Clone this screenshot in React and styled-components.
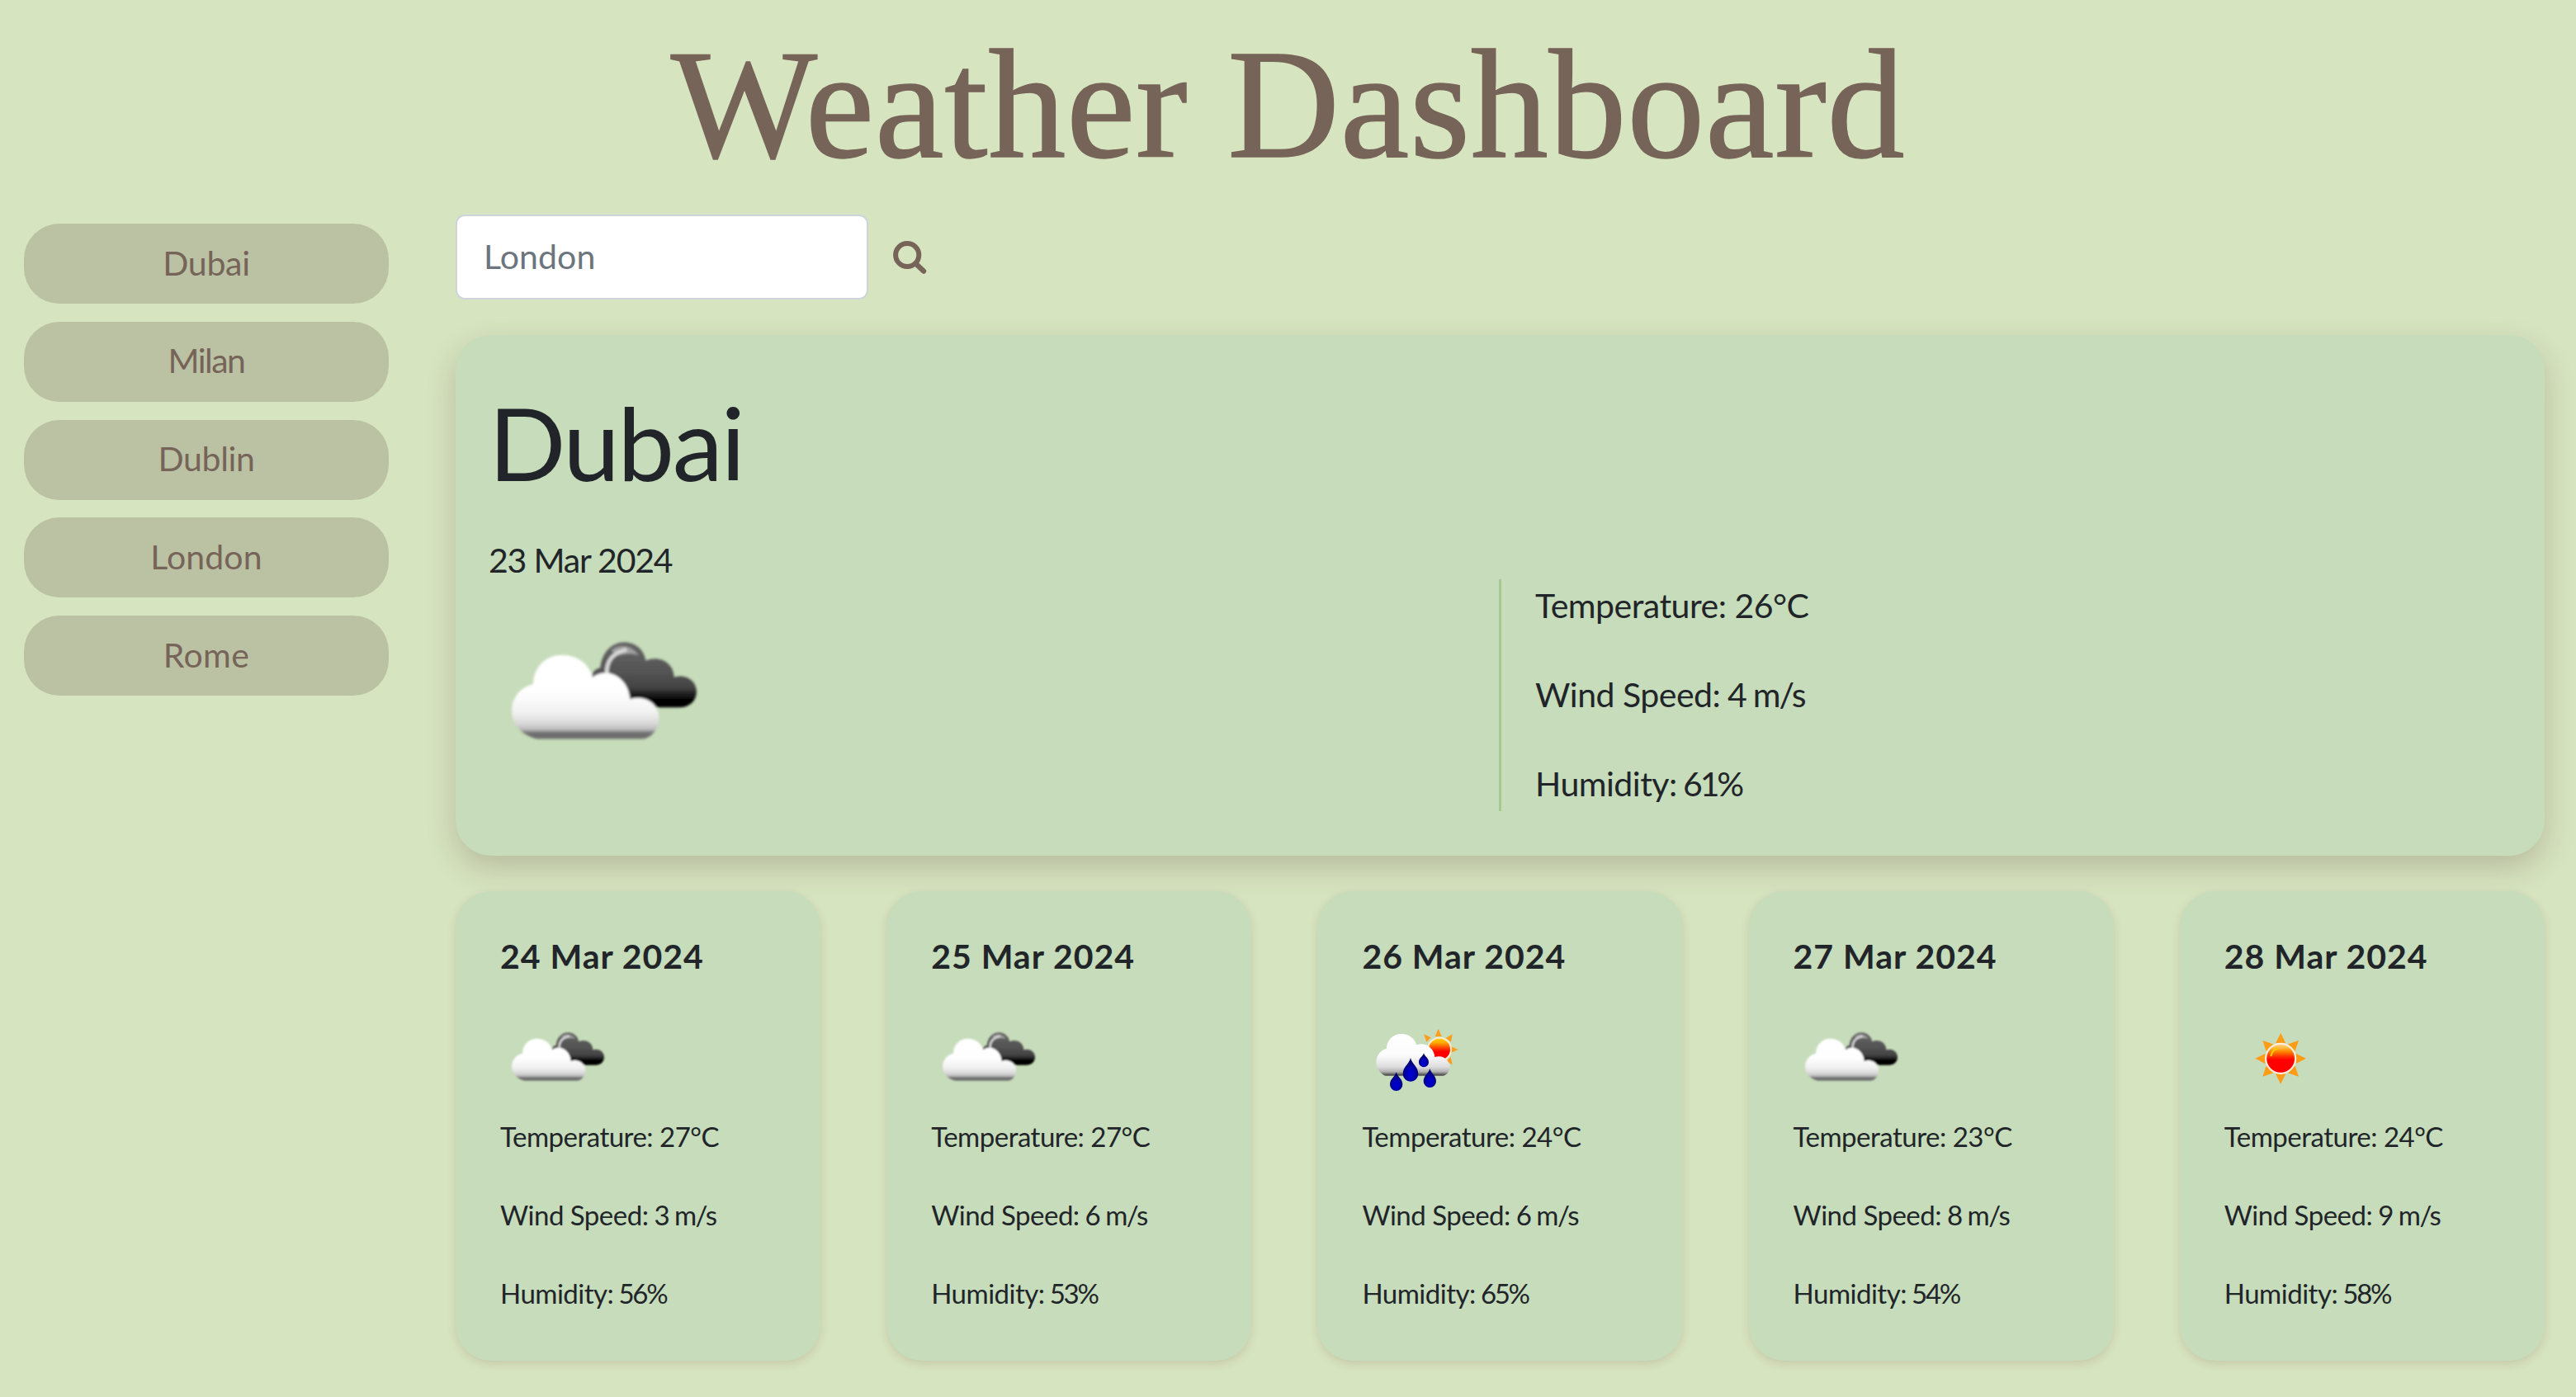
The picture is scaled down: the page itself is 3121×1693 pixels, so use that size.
import React from "react";
import styled, { createGlobalStyle } from "styled-components";

const GlobalStyle = createGlobalStyle`
  *, *::before, *::after { box-sizing: border-box; }
  body {
    margin: 0;
    min-height: 100vh;
    background: #d7e4c0;
    color: #212529;
    font-family: Lato, "Open Sans", sans-serif;
  }
  h1, h2, h3, p, ul { margin: 0; padding: 0; }
`;

const Title = styled.h1`
  height: 252px;
  line-height: 253px;
  text-align: center;
  font-family: "Liberation Serif", serif;
  font-size: 188px;
  font-weight: 400;
  letter-spacing: 0.75px;
  color: #776459;
  -webkit-text-stroke: 1.5px #776459;
`;

const Layout = styled.div`
  display: flex;
  gap: 81px;
  padding: 8px 38px 40px 29px;
`;

const History = styled.aside`
  flex: 0 0 442px;
  display: flex;
  flex-direction: column;
  gap: 21.8px;
  padding-top: 11px;
`;

const HistoryButton = styled.button`
  height: 97px;
  padding: 0 0 3px;
  border: 0;
  border-radius: 43px;
  background: #bbc2a4;
  color: #776459;
  font-family: inherit;
  font-size: 41px;
  letter-spacing: ${(p) => p.$tracking}px;
`;

const Main = styled.main`
  flex: 1;
  min-width: 0;
  display: flex;
  flex-direction: column;
`;

const SearchForm = styled.form`
  display: flex;
  align-items: center;
  gap: 29px;
  height: 103px;
`;

const SearchInput = styled.input`
  width: 500px;
  height: 103px;
  padding: 0 32px 3px;
  border: 2px solid #ced4da;
  border-radius: 11px;
  background: #fff;
  color: #212529;
  font-family: inherit;
  font-size: 41px;
  letter-spacing: 0.1px;
  outline: none;
  &::placeholder { color: #6c757d; opacity: 1; }
`;

const SearchButton = styled.button`
  display: flex;
  padding: 0;
  border: 0;
  background: none;
  color: #776459;
`;

const Today = styled.section`
  height: 631px;
  margin-top: 43px;
  padding: 56px 40px 0;
  border-radius: 43px;
  background: #c6dcba;
  box-shadow: 0 15px 36px rgba(60, 32, 25, 0.2);
`;

const City = styled.h2`
  line-height: 148px;
  font-size: 123px;
  font-weight: 400;
  letter-spacing: -2.4px;
`;

const TodayDate = styled.p`
  margin-top: 46px;
  line-height: 46px;
  font-size: 41px;
  letter-spacing: -1.2px;
`;

const Conditions = styled.div`
  display: grid;
  grid-template-columns: 1224px 1fr;
  height: 281px;
`;

const TodayIcon = styled.div`
  padding-top: 34px;
  margin-left: -2px;
`;

const TodayStats = styled.div`
  display: flex;
  flex-direction: column;
  gap: 48px;
  padding: 2px 0 0 41px;
  border-left: 3px solid #a5c990;
  font-size: 41px;
  line-height: 60px;
`;

const Forecast = styled.div`
  display: grid;
  grid-template-columns: repeat(5, 1fr);
  gap: 80px;
  margin-top: 43px;
`;

const DayCard = styled.article`
  height: 569px;
  padding: 54px 0 0 54px;
  border-radius: 43px;
  background: #c6dcba;
  box-shadow: 0 4px 11px rgba(90, 30, 20, 0.13);
`;

const DayDate = styled.h3`
  line-height: 50px;
  font-size: 41px;
  font-weight: 700;
  letter-spacing: 0.98px;
`;

const DayIcon = styled.div`
  height: 110px;
  margin: 46px 0 12px -1px;
`;

const DayStats = styled.div`
  display: flex;
  flex-direction: column;
  gap: 45px;
  font-size: 33px;
  line-height: 50px;
`;

const Stat = styled.p`
  white-space: pre;
  letter-spacing: -0.5px;
`;

const Value = styled.span`
  letter-spacing: ${(p) => p.$tracking}px;
`;

const IconSvg = styled.svg`
  display: block;
`;

function SearchIcon() {
  return (
    <IconSvg width="42" height="42" viewBox="0 0 42 42" fill="none" stroke="currentColor" strokeWidth="6">
      <circle cx="18.2" cy="18" r="14.1" />
      <path d="M28.5 28.5 L38 37.5" strokeWidth="6.4" strokeLinecap="round" />
    </IconSvg>
  );
}

function CloudsIcon({ id, width, height }) {
  return (
    <IconSvg width={width} height={height} viewBox="0 0 840 660">
      <defs>
        <linearGradient id={`${id}-light`} gradientUnits="userSpaceOnUse" x1="0" y1="131" x2="0" y2="438">
          <stop offset="0" stopColor="#fff" />
          <stop offset="0.45" stopColor="#fefefe" />
          <stop offset="0.68" stopColor="#f1f1f1" />
          <stop offset="0.81" stopColor="#dadada" />
          <stop offset="0.88" stopColor="#bdbdbd" />
          <stop offset="0.925" stopColor="#707070" />
          <stop offset="0.97" stopColor="#6a6a6a" />
          <stop offset="1" stopColor="#858585" />
        </linearGradient>
        <linearGradient id={`${id}-dark`} gradientUnits="userSpaceOnUse" x1="0" y1="85" x2="0" y2="322">
          <stop offset="0" stopColor="#666" />
          <stop offset="0.45" stopColor="#545454" />
          <stop offset="0.7" stopColor="#424242" />
          <stop offset="0.88" stopColor="#020202" />
          <stop offset="1" stopColor="#000" />
        </linearGradient>
        <filter id={`${id}-soft`} x="-5%" y="-5%" width="110%" height="110%">
          <feGaussianBlur stdDeviation="5" />
        </filter>
      </defs>
      <g transform="translate(0 42)" filter={`url(#${id}-soft)`}>
        <path
          fill={`url(#${id}-dark)`}
          d="M378 216C384 192 396 180 412 178C418 120 455 85 500 85C545 87 570 115 578 152C625 130 680 160 680 212C728 198 762 230 762 265C760 300 735 322 700 322H480V216Z"
        />
        <path d="M452 116C470 96 520 88 552 132C520 122 500 128 475 132Z" fill="#a0a0a0" />
        <path d="M436 204C432 160 452 124 508 112" fill="none" stroke="#d8d8d8" strokeWidth="14" />
        <path
          fill={`url(#${id}-light)`}
          d="M185 437C130 425 90 385 90 335C90 285 125 245 168 238C168 178 212 131 272 131C330 131 372 165 384 212C440 172 515 215 520 292C575 275 625 308 625 360C625 400 600 432 565 437Z"
        />
      </g>
    </IconSvg>
  );
}

function RainIcon({ id, width, height }) {
  const drops = [
    [180, 156, 242, 28],
    [128, 208, 276, 23],
    [250, 195, 264, 23],
    [228, 139, 190, 18],
  ];
  return (
    <IconSvg width={width} height={height} viewBox="0 0 420 330">
      <defs>
        <linearGradient id={`${id}-cloud`} gradientUnits="userSpaceOnUse" x1="0" y1="69" x2="0" y2="222">
          <stop offset="0" stopColor="#fff" />
          <stop offset="0.5" stopColor="#fcfcfc" />
          <stop offset="0.78" stopColor="#dedede" />
          <stop offset="0.9" stopColor="#b0b0b0" />
          <stop offset="0.97" stopColor="#555" />
          <stop offset="1" stopColor="#555" />
        </linearGradient>
        <linearGradient id={`${id}-sun`} gradientUnits="userSpaceOnUse" x1="0" y1="82" x2="0" y2="170">
          <stop offset="0" stopColor="#ffd400" />
          <stop offset="0.2" stopColor="#ffb000" />
          <stop offset="0.45" stopColor="#ff3a00" />
          <stop offset="0.58" stopColor="#f00" />
          <stop offset="1" stopColor="#f00" />
        </linearGradient>
        <radialGradient id={`${id}-drop`} cx="0.5" cy="0.68" r="0.5">
          <stop offset="0" stopColor="#0000d8" />
          <stop offset="0.5" stopColor="#0000bb" />
          <stop offset="1" stopColor="#00006c" />
        </radialGradient>
        <filter id={`${id}-soft`} x="-5%" y="-5%" width="110%" height="110%">
          <feGaussianBlur stdDeviation="2.2" />
        </filter>
      </defs>
      <g filter={`url(#${id}-soft)`}>
        <path
          fill="#ff9d1c"
          d="M281 50L293 78H269ZM332 70L327 98L308 84ZM353 126L326 114V138ZM332 181L310 168L326 152ZM228 70L254 82L238 98Z"
        />
        <circle cx="285" cy="125" r="42" fill={`url(#${id}-sun)`} stroke="#ffecd0" strokeWidth="6" />
        <path
          fill={`url(#${id}-cloud)`}
          d="M88 221C68 212 55 192 55 170C56 145 73 126 93 122C93 92 116 69 147 69C174 69 194 85 202 109C235 96 266 122 268 153C298 143 322 164 322 190C322 206 312 217 300 221Z"
        />
        {drops.map(([x, top, bottom, r]) => (
          <path
            key={x}
            fill={`url(#${id}-drop)`}
            d={`M${x} ${top}C${x + 5} ${top + r * 0.8} ${x + r} ${bottom - r * 1.9} ${x + r} ${bottom - r}A${r} ${r} 0 0 1 ${x - r} ${bottom - r}C${x - r} ${bottom - r * 1.9} ${x - 5} ${top + r * 0.8} ${x} ${top}Z`}
          />
        ))}
      </g>
    </IconSvg>
  );
}

function SunIcon({ id, width, height }) {
  return (
    <IconSvg width={width} height={height} viewBox="-17 0 420 330">
      <defs>
        <linearGradient id={`${id}-disc`} gradientUnits="userSpaceOnUse" x1="0" y1="104" x2="0" y2="212">
          <stop offset="0" stopColor="#ffd890" />
          <stop offset="0.15" stopColor="#ffb840" />
          <stop offset="0.26" stopColor="#ff8a00" />
          <stop offset="0.45" stopColor="#ff2a00" />
          <stop offset="0.54" stopColor="#f00" />
          <stop offset="1" stopColor="#f00" />
        </linearGradient>
        <filter id={`${id}-soft`} x="-5%" y="-5%" width="110%" height="110%">
          <feGaussianBlur stdDeviation="2.2" />
        </filter>
      </defs>
      <g filter={`url(#${id}-soft)`}>
        {[0, 45, 90, 135, 180, 225, 270, 315].map((angle) => (
          <path key={angle} d="M190.5 66L209 103H172Z" fill="#ff9c18" transform={`rotate(${angle} 190.5 158.5)`} />
        ))}
        <circle cx="190.5" cy="158.5" r="54" fill={`url(#${id}-disc)`} stroke="#ffeedd" strokeWidth="6.5" />
        <path d="M155 150C158 134 166 125 180 121" fill="none" stroke="#ffc800" strokeWidth="7" />
      </g>
    </IconSvg>
  );
}

const icons = { clouds: CloudsIcon, rain: RainIcon, sun: SunIcon };

const cities = [
  { name: "Dubai", tracking: -0.26 },
  { name: "Milan", tracking: -1.5 },
  { name: "Dublin", tracking: -0.34 },
  { name: "London", tracking: 0.1 },
  { name: "Rome", tracking: 0.39 },
];

const days = [
  { date: "24 Mar 2024", icon: "clouds", temp: 27, wind: 3, humidity: 56 },
  { date: "25 Mar 2024", icon: "clouds", temp: 27, wind: 6, humidity: 53 },
  { date: "26 Mar 2024", icon: "rain", temp: 24, wind: 6, humidity: 65 },
  { date: "27 Mar 2024", icon: "clouds", temp: 23, wind: 8, humidity: 54 },
  { date: "28 Mar 2024", icon: "sun", temp: 24, wind: 9, humidity: 58 },
];

function Stats({ temp, wind, humidity, tracking }) {
  return (
    <>
      <Stat>Temperature:<Value $tracking={tracking[0]}> {temp}°C</Value></Stat>
      <Stat>Wind Speed:<Value $tracking={tracking[1]}> {wind} m/s</Value></Stat>
      <Stat>Humidity:<Value $tracking={tracking[2]}> {humidity}%</Value></Stat>
    </>
  );
}

export default function App() {
  return (
    <>
      <GlobalStyle />
      <Title>Weather Dashboard</Title>
      <Layout>
        <History>
          {cities.map((c) => (
            <HistoryButton key={c.name} type="button" $tracking={c.tracking}>{c.name}</HistoryButton>
          ))}
        </History>
        <Main>
          <SearchForm>
            <SearchInput placeholder="London" aria-label="City" />
            <SearchButton type="button" aria-label="Search"><SearchIcon /></SearchButton>
          </SearchForm>
          <Today>
            <City>Dubai</City>
            <TodayDate>23 Mar 2024</TodayDate>
            <Conditions>
              <TodayIcon><CloudsIcon id="today" width={280} height={220} /></TodayIcon>
              <TodayStats>
                <Stats temp={26} wind={4} humidity={61} tracking={[-0.5, -1.8, -3.2]} />
              </TodayStats>
            </Conditions>
          </Today>
          <Forecast>
            {days.map((d, i) => {
              const Icon = icons[d.icon];
              return (
                <DayCard key={d.date}>
                  <DayDate>{d.date}</DayDate>
                  <DayIcon><Icon id={`day-${i}`} width={140} height={110} /></DayIcon>
                  <DayStats>
                    <Stats temp={d.temp} wind={d.wind} humidity={d.humidity} tracking={[-0.5, -1.5, -2.3]} />
                  </DayStats>
                </DayCard>
              );
            })}
          </Forecast>
        </Main>
      </Layout>
    </>
  );
}
